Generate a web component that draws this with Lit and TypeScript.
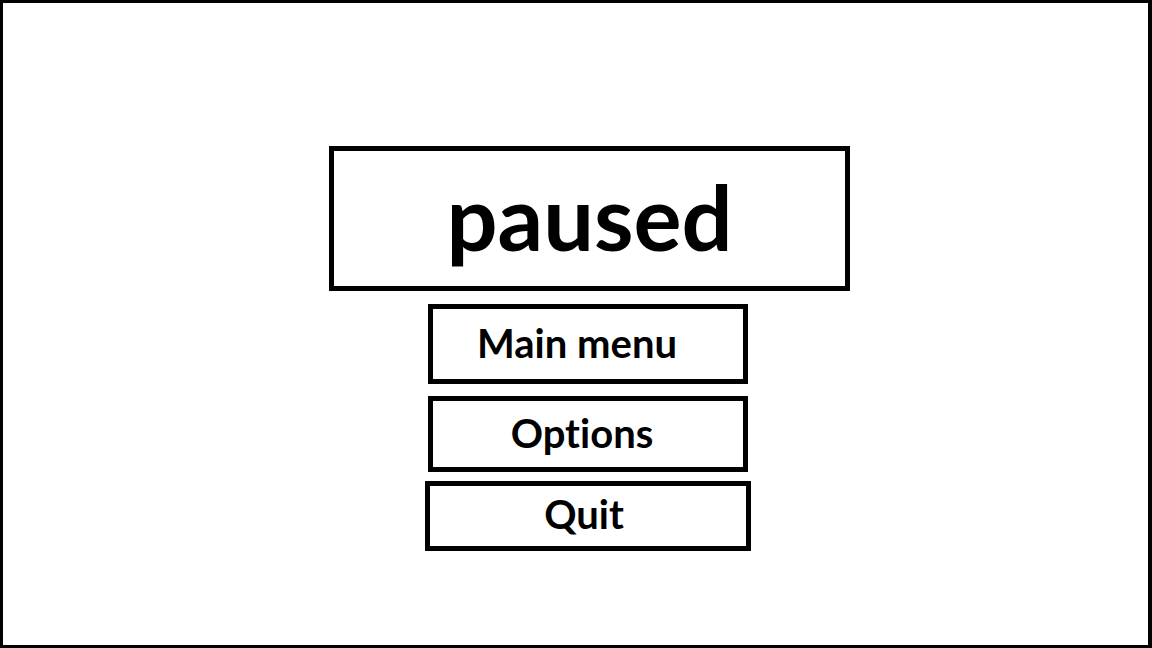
import { LitElement, html, css } from "lit";
import { customElement } from "lit/decorators.js";

@customElement("app-root")
export class AppRoot extends LitElement {
  static styles = css`
    :host {
      display: block;
    }
    .screen {
      box-sizing: border-box;
      min-height: 100vh;
      padding: 143px 0 0 28px;
      border: 3px solid #000;
      border-right-width: 4px;
      background: #fff;
      color: #000;
      font-family: Lato, "Open Sans", sans-serif;
      font-weight: 700;
      font-variant-ligatures: none;
      display: flex;
      flex-direction: column;
      align-items: center;
    }
    .title {
      box-sizing: border-box;
      width: 521px;
      max-width: 100%;
      margin: 0 0 13px;
      padding: 15px 0 20px;
      border: 5px solid #000;
      font-size: 90px;
      line-height: 100px;
      font-weight: 700;
      text-align: center;
    }
    .menu {
      display: flex;
      flex-direction: column;
      align-items: center;
      width: 326px;
      max-width: 100%;
      margin-right: 3px;
    }
    .item {
      box-sizing: border-box;
      width: 320px;
      margin: 0 0 12px;
      padding: 10px 22px 12px 0;
      border: 5px solid #000;
      border-radius: 0;
      background: #fff;
      color: inherit;
      font: inherit;
      font-variant-ligatures: none;
      font-size: 40px;
      line-height: 48px;
      text-align: center;
      cursor: pointer;
    }
    .options {
      margin-bottom: 9px;
      padding: 8px 12px 10px 0;
    }
    .quit {
      width: 100%;
      margin-bottom: 0;
      padding: 4px 8px 8px 0;
    }
  `;

  render() {
    return html`
      <main class="screen">
        <h1 class="title">paused</h1>
        <nav class="menu">
          <button class="item" type="button">Main menu</button>
          <button class="item options" type="button">Options</button>
          <button class="item quit" type="button">Quit</button>
        </nav>
      </main>
    `;
  }
}
